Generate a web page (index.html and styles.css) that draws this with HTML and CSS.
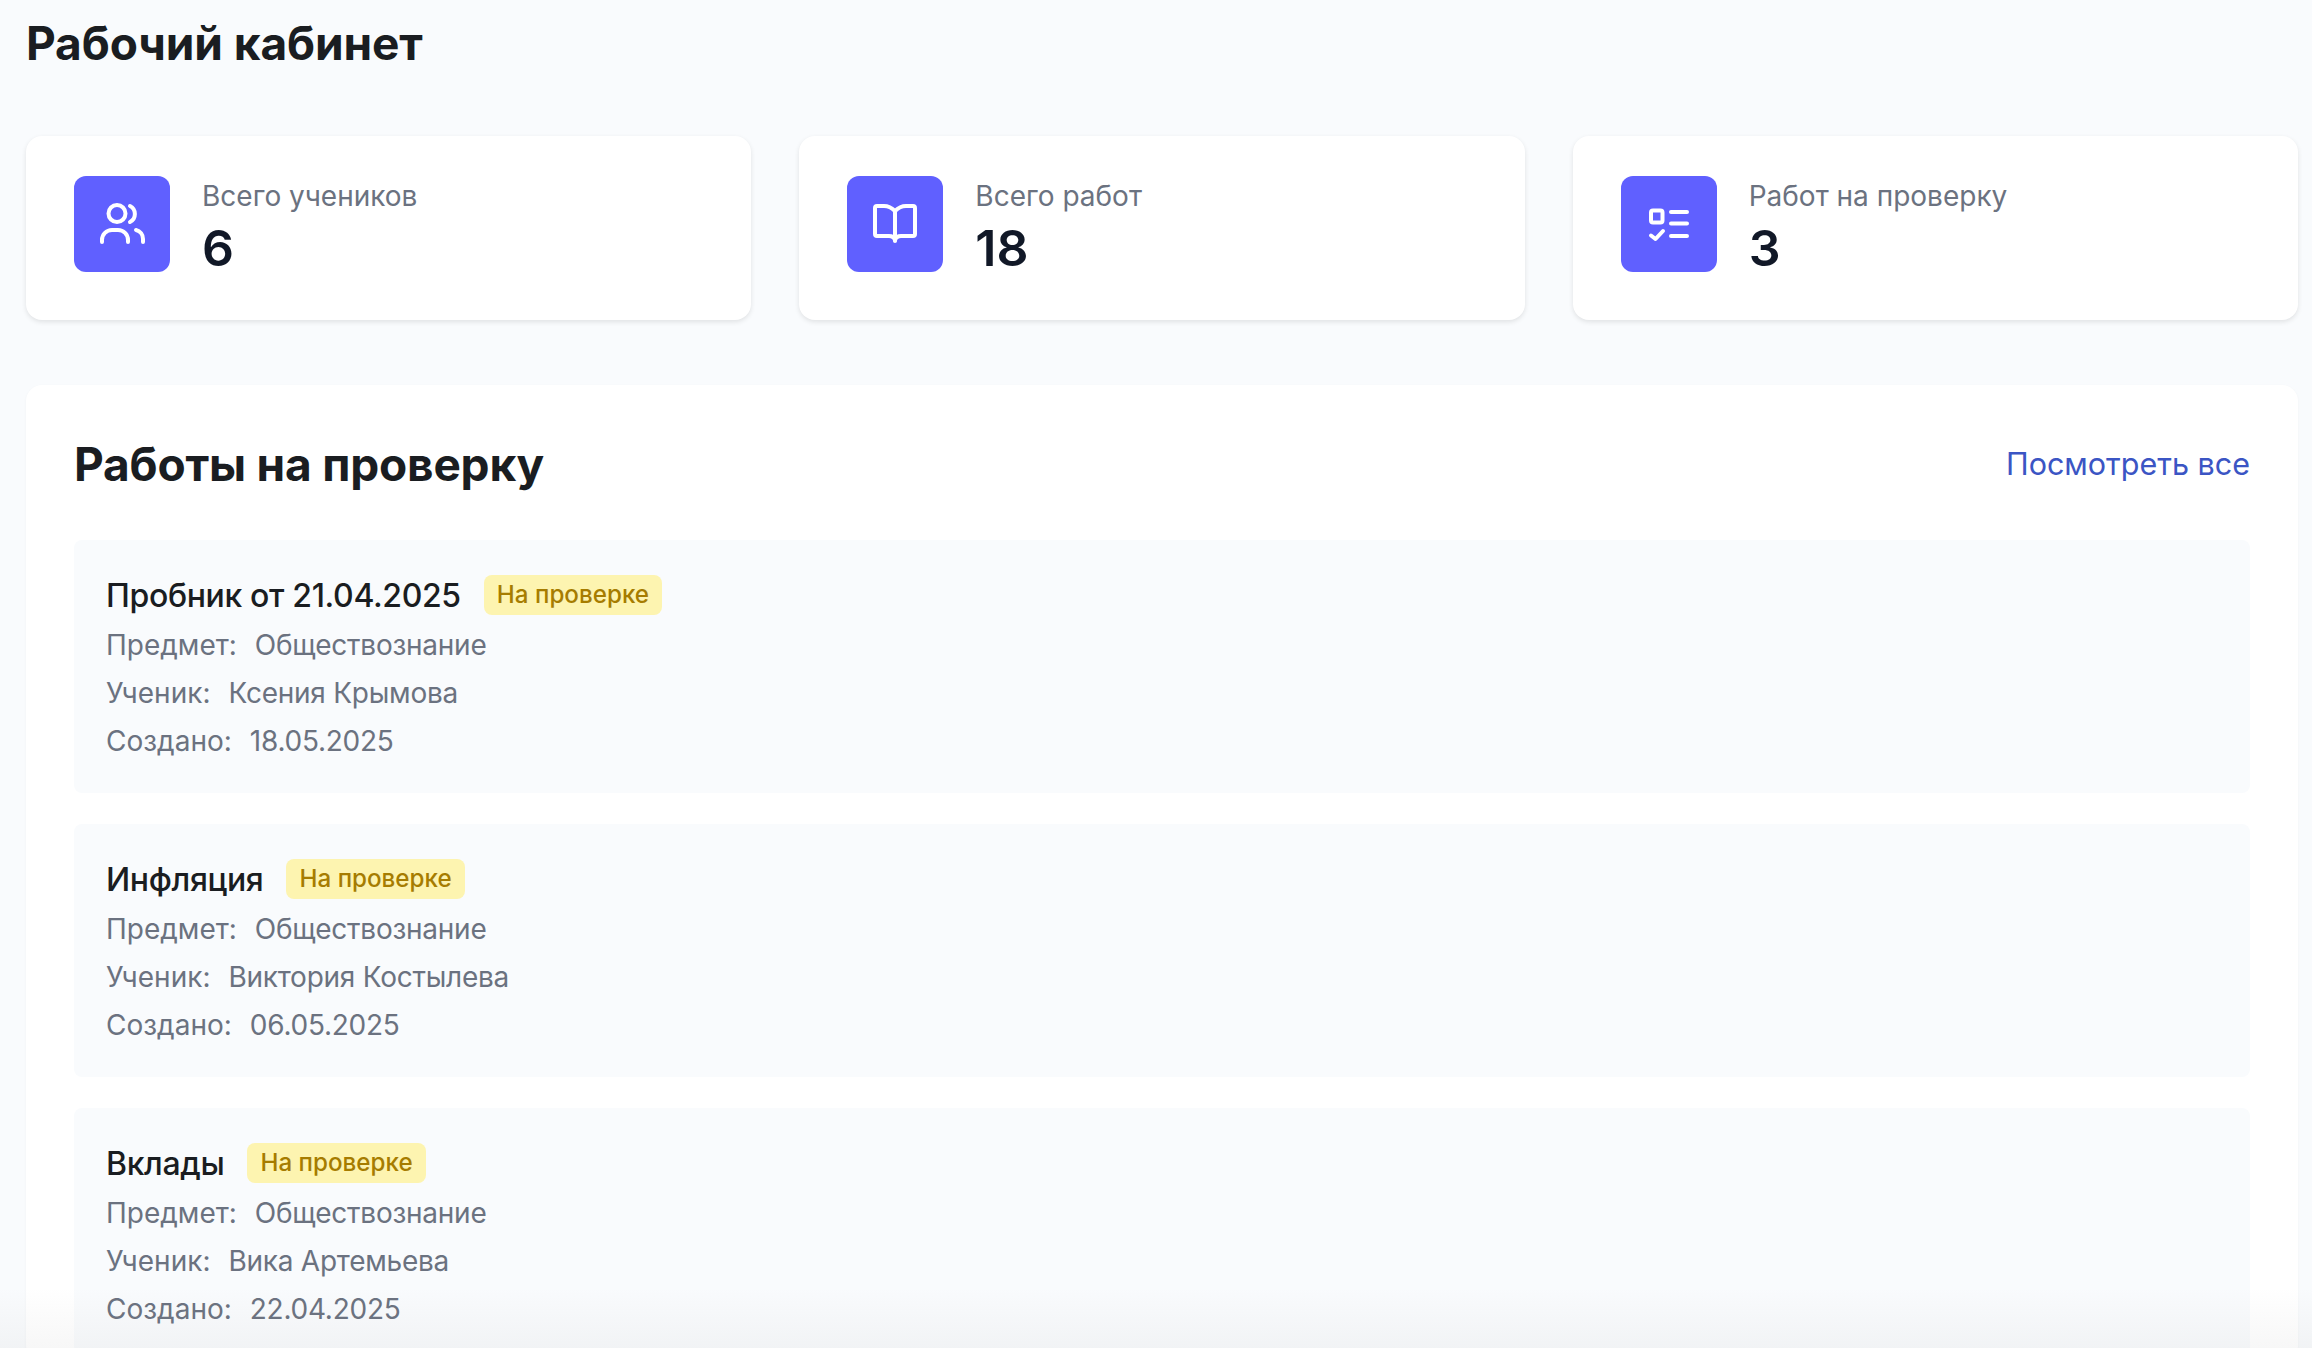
FILE: index.html
```html
<!DOCTYPE html>
<html lang="ru">
<head>
    <meta charset="UTF-8">
    <meta name="viewport" content="width=device-width, initial-scale=1.0">
    <title>Рабочий кабинет</title>
    <link rel="stylesheet" href="styles.css">
</head>
<body>
    <div class="page">
        <h1 class="page-title">Рабочий кабинет</h1>

        <div class="stats">
            <div class="stat-card">
                <div class="stat-icon">
                    <svg viewBox="0 0 76 76" width="76" height="76" fill="none" stroke="currentColor" stroke-width="4" stroke-linecap="round" stroke-linejoin="round">
                        <circle cx="33" cy="27.500" r="8.500"/>
                        <path d="M46 20a9 9 0 0 1 0 16"/>
                        <path d="M18 56v-2a10 10 0 0 1 10-10h6a10 10 0 0 1 10 10v2"/>
                        <path d="M52 44a9 9 0 0 1 7 9v3"/>
                    </svg>
                </div>
                <div>
                    <div class="stat-label">Всего учеников</div>
                    <div class="stat-value">6</div>
                </div>
            </div>
            <div class="stat-card">
                <div class="stat-icon">
                    <svg viewBox="0 0 76 76" width="76" height="76" fill="none" stroke="currentColor" stroke-width="4" stroke-linecap="round" stroke-linejoin="round">
                        <path d="M38 25c-3-3-7-5-11-5h-7a2 2 0 0 0-2 2v26a2 2 0 0 0 2 2h12c3 0 5 1 6 4 1-3 3-4 6-4h12a2 2 0 0 0 2-2V22a2 2 0 0 0-2-2h-7c-4 0-8 2-11 5z"/>
                        <path d="M38 25v30"/>
                    </svg>
                </div>
                <div>
                    <div class="stat-label">Всего работ</div>
                    <div class="stat-value">18</div>
                </div>
            </div>
            <div class="stat-card">
                <div class="stat-icon">
                    <svg viewBox="0 0 76 76" width="76" height="76" fill="none" stroke="currentColor" stroke-width="4" stroke-linecap="round" stroke-linejoin="round">
                        <rect x="20" y="24.500" width="11.500" height="12" rx="2"/>
                        <path d="M40 26h16M40 37.500h16M40 50h16"/>
                        <path d="M20 49.500l4.500 3.500 7.500-8"/>
                    </svg>
                </div>
                <div>
                    <div class="stat-label">Работ на проверку</div>
                    <div class="stat-value">3</div>
                </div>
            </div>
        </div>

        <div class="panel">
            <div class="panel-header">
                <h2 class="panel-title">Работы на проверку</h2>
                <a class="panel-link" href="#">Посмотреть все</a>
            </div>

            <div class="work-item">
                <div class="work-head">
                    <span class="work-name">Пробник от 21.04.2025</span>
                    <span class="badge">На проверке</span>
                </div>
                <div class="work-row"><span>Предмет:</span><span class="work-value">Обществознание</span></div>
                <div class="work-row"><span>Ученик:</span><span class="work-value">Ксения Крымова</span></div>
                <div class="work-row"><span>Создано:</span><span class="work-value">18.05.2025</span></div>
            </div>
            <div class="work-item">
                <div class="work-head">
                    <span class="work-name">Инфляция</span>
                    <span class="badge">На проверке</span>
                </div>
                <div class="work-row"><span>Предмет:</span><span class="work-value">Обществознание</span></div>
                <div class="work-row"><span>Ученик:</span><span class="work-value">Виктория Костылева</span></div>
                <div class="work-row"><span>Создано:</span><span class="work-value">06.05.2025</span></div>
            </div>
            <div class="work-item">
                <div class="work-head">
                    <span class="work-name">Вклады</span>
                    <span class="badge">На проверке</span>
                </div>
                <div class="work-row"><span>Предмет:</span><span class="work-value">Обществознание</span></div>
                <div class="work-row"><span>Ученик:</span><span class="work-value">Вика Артемьева</span></div>
                <div class="work-row"><span>Создано:</span><span class="work-value">22.04.2025</span></div>
            </div>
        </div>
    </div>
    <div class="bottom-fade"></div>
</body>
</html>
```

FILE: styles.css
```css
* {
    box-sizing: border-box;
}

html, body {
    height: 100%;
}

body {
    margin: 0;
    overflow: hidden;
    background-color: #f9fbfd;
    font-family: Inter, "Noto Sans", sans-serif;
    color: #111827;
}

.page {
    padding: 14px 14px 0 26px;
}

.page-title {
    margin: 0 0 64px;
    font-size: 46px;
    line-height: 58px;
    font-weight: 700;
    letter-spacing: -0.1px;
    color: #1a1d21;
}

.stats {
    display: grid;
    grid-template-columns: repeat(3, 1fr);
    gap: 48px;
    margin-bottom: 65px;
}

.stat-card {
    display: flex;
    gap: 32px;
    padding: 40px 48px 48px;
    background-color: #fff;
    border-radius: 16px;
    box-shadow: 0 2px 5px rgba(0, 0, 0, 0.1);
}

.stat-icon {
    flex: none;
    display: flex;
    align-items: center;
    justify-content: center;
    width: 96px;
    height: 96px;
    background-color: #6060ff;
    border-radius: 12px;
    color: #fff;
}

.stat-label {
    margin-top: 2px;
    font-size: 28px;
    line-height: 36px;
    color: #6b7280;
}

.stat-value {
    margin-top: 10px;
    font-size: 50px;
    line-height: 48px;
    font-weight: 600;
}

.panel {
    padding: 47px 48px 0;
    background-color: #fff;
    border-radius: 16px;
    box-shadow: 0 1px 3px rgba(0, 0, 0, 0.04);
}

.panel-header {
    display: flex;
    justify-content: space-between;
    align-items: center;
    margin-bottom: 44px;
}

.panel-title {
    margin: 0;
    font-size: 46px;
    line-height: 64px;
    font-weight: 700;
    letter-spacing: -0.2px;
    color: #1a1d21;
}

.panel-link {
    margin-bottom: 2px;
    font-size: 30.5px;
    color: #3b55c4;
    text-decoration: none;
}

.work-item {
    padding: 36px 32px 28px;
    margin-bottom: 31px;
    background-color: #f9fbfd;
    border-radius: 8px;
}

.work-head {
    display: flex;
    align-items: center;
    gap: 23px;
    height: 40px;
    margin-bottom: 5px;
}

.work-name {
    font-size: 32px;
    line-height: 40px;
    font-weight: 500;
    letter-spacing: -0.35px;
    color: #1a1d21;
}

.badge {
    margin-bottom: 3px;
    padding: 0 13px;
    font-size: 24.2px;
    line-height: 40px;
    font-weight: 500;
    color: #a67c00;
    background-color: #fdf4b0;
    border-radius: 8px;
}

.work-row {
    display: flex;
    gap: 18px;
    font-size: 28px;
    line-height: 48px;
    color: #6b7280;
}

.work-value {
    letter-spacing: -0.25px;
}

/* soft grey fade along the lower edge of the window */
.bottom-fade {
    position: absolute;
    left: 0;
    right: 0;
    bottom: 0;
    height: 60px;
    background: linear-gradient(to bottom, rgba(120, 120, 120, 0), rgba(120, 120, 120, 0.06));
    pointer-events: none;
}
```
